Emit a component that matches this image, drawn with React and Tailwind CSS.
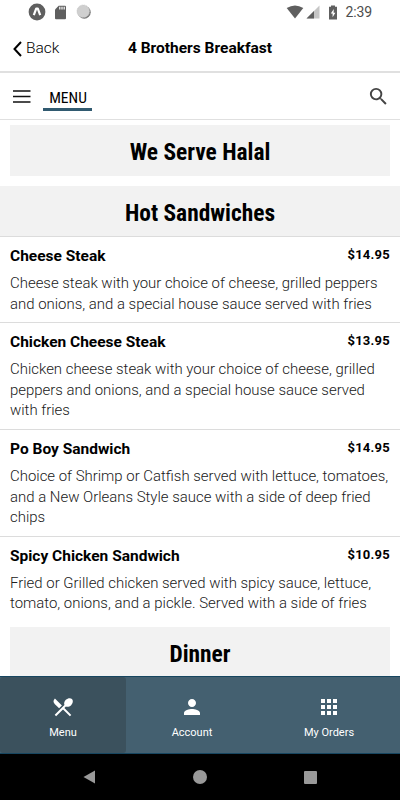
import React from 'react';
import { MdSearch, MdPerson, MdApps } from 'react-icons/md';

const items = [
    {
        name: 'Cheese Steak',
        price: '$14.95',
        description: 'Cheese steak with your choice of cheese, grilled peppers and onions, and a special house sauce served with fries'
    },
    {
        name: 'Chicken Cheese Steak',
        price: '$13.95',
        description: 'Chicken cheese steak with your choice of cheese, grilled peppers and onions, and a special house sauce served with fries'
    },
    {
        name: 'Po Boy Sandwich',
        price: '$14.95',
        description: 'Choice of Shrimp or Catfish served with lettuce, tomatoes, and a New Orleans Style sauce with a side of deep fried chips'
    },
    {
        name: 'Spicy Chicken Sandwich',
        price: '$10.95',
        description: 'Fried or Grilled chicken served with spicy sauce, lettuce, tomato, onions, and a pickle. Served with a side of fries'
    }
];

const StatusBar = () => (
    <div className="flex h-6 shrink-0 items-center justify-between pl-7 pr-7 text-[#5f5f5f]">
        <div className="flex items-center">
            <svg className="h-[18px] w-[18px]" viewBox="0 0 18 18">
                <circle cx="9" cy="9" r="8.4" fill="#5f5f5f" />
                <path d="M5.8 12.2 8.200 5.600h1.600l2.400 6.600" fill="none" stroke="#fff" strokeWidth="2.200" strokeLinejoin="round" />
            </svg>
            <svg className="ml-2 h-[15px] w-[13px]" viewBox="0 0 13 15">
                <path d="M4.700 0.700H11q1 0 1 1v11.600q0 1-1 1H2q-1 0-1-1V4.500z" fill="#5f5f5f" />
                <path d="M5.800 1.800v2.700M8 1.800v2.700M10.200 1.800v2.700" stroke="#fff" strokeWidth="1.200" />
            </svg>
            <svg className="ml-[9px] h-4 w-4" viewBox="0 0 16 16">
                <circle cx="8.300" cy="8.300" r="6.400" fill="#777" />
                <circle cx="7.300" cy="7.300" r="6.300" fill="#cfcfcf" stroke="#b8b8b8" strokeWidth="0.700" strokeDasharray="1 1" />
            </svg>
        </div>
        <div className="flex items-center">
            <svg className="h-[14px] w-[18px]" viewBox="0 0 18 14">
                <path d="M0.700 3Q9-2 17.300 3L9 13.500z" fill="#5f5f5f" />
            </svg>
            <svg className="ml-0.5 h-[14px] w-[14px]" viewBox="0 0 14 14">
                <path d="M13.500 0.500v13H0.500z" fill="#c6c6c6" />
                <path d="M8 6v7.500H0.500z" fill="#5f5f5f" />
            </svg>
            <svg className="ml-2 h-[15px] w-2.5" viewBox="0 0 10 15">
                <path d="M3 0.500h4v1.300h2v12.700H1V1.800h2z" fill="#5f5f5f" />
                <path d="M5.800 4 2.800 8.600h1.800V12.300l2.800-4.600H5.600z" fill="#fff" />
            </svg>
            <span className="ml-[7px] text-sm leading-none tracking-[-0.1px] text-[#4d4d4d]">2:39</span>
        </div>
    </div>
);

const SectionTitle = ({ title, className }) => (
    <h2 className={`shrink-0 bg-[#f2f2f2] text-center font-['Roboto_Condensed','Roboto'] text-[23.4px] font-bold leading-[54px] [font-stretch:75%] ${className}`}>
        {title}
    </h2>
);

const MenuItem = ({ item }) => (
    <li className="border-t border-[#dcdcdc] px-2.5 pb-2 pt-[9px]">
        <div className="flex justify-between">
            <h3 className="text-[15.5px] font-bold leading-[21px]">{item.name}</h3>
            <span className="text-[13px] font-bold leading-[18px] tracking-[0.25px]">{item.price}</span>
        </div>
        <p className="mt-1.5 text-[14.95px] font-light leading-[20.6px] text-[#202020]">
            {item.description}
        </p>
    </li>
);

const Tab = ({ icon, label, className }) => (
    <button type="button" className={`flex flex-col items-center pt-[18px] text-white ${className}`}>
        <span className="flex h-6 items-center">{icon}</span>
        <span className="mt-[7px] text-[11px] leading-[14px]">{label}</span>
    </button>
);

const ForkSpoon = () => (
    <svg className="h-6 w-6" viewBox="0 0 24 24" fill="currentColor">
        <path d="M8.100 13.340l2.830-2.830L3.910 3.500a4.008 4.008 0 0 0 0 5.660l4.190 4.180zm6.780-1.810c1.530.710 3.680.210 5.270-1.380 1.910-1.910 2.280-4.650.810-6.120-1.460-1.460-4.200-1.100-6.120.810-1.590 1.590-2.090 3.740-1.380 5.270L3.700 19.870l1.410 1.410L12 14.410l6.880 6.880 1.410-1.410L13.410 13l1.470-1.470z" />
    </svg>
);

export default function App() {
    return (
        <div className="flex h-[800px] w-[400px] flex-col overflow-hidden bg-white font-['Roboto',sans-serif] text-black">
            <StatusBar />

            <header className="grid h-[49px] shrink-0 grid-cols-[1fr_auto_1fr] items-center border-b-2 border-[#e0e0e0] px-3">
                <button type="button" className="flex items-center pt-0.5 text-[15.5px] font-light">
                    <svg className="mr-1 h-4 w-[10px]" viewBox="0 0 10 16" fill="none" stroke="currentColor" strokeWidth="2">
                        <path d="M9 1 2.500 8l6.500 7" />
                    </svg>
                    Back
                </button>
                <h1 className="pt-[3px] text-[15.5px] font-bold">4 Brothers Breakfast</h1>
            </header>

            <nav className="flex h-[47px] shrink-0 items-center border-b border-[#e0e0e0] px-2.5">
                <svg className="h-[23px] w-[23px]" viewBox="0 0 23 23" stroke="#111" strokeWidth="1.700">
                    <path d="M3 6h17.500M3 11.500h17.500M3 17h17.500" />
                </svg>
                <span className="ml-2.5 mt-[3px] h-[26px] w-[49px] border-b-[3px] border-[#315a70] pl-px text-center font-['Roboto_Condensed','Roboto'] text-[15.5px] leading-[26px] [font-stretch:75%]">
                    MENU
                </span>
                <MdSearch className="ml-auto h-[23px] w-[23px] text-[#444]" />
            </nav>

            <main className="flex min-h-0 flex-1 flex-col overflow-hidden">
                <SectionTitle title="We Serve Halal" className="mx-2.5 mb-2.5 mt-[5px] h-[51px]" />
                <SectionTitle title="Hot Sandwiches" className="h-[50px]" />
                <ul className="shrink-0">
                    {items.map((item) => (
                        <MenuItem key={item.name} item={item} />
                    ))}
                </ul>
                <SectionTitle title="Dinner" className="mx-2.5 mt-[5px] h-[51px]" />
            </main>

            <footer className="flex h-[78px] shrink-0 border-y border-[#174660] bg-[#446070]">
                <Tab icon={<ForkSpoon />} label="Menu" className="w-[126px] rounded-[3px] bg-[#3b515d]" />
                <Tab icon={<MdPerson className="h-6 w-6" />} label="Account" className="w-[132px]" />
                <Tab icon={<MdApps className="h-6 w-6" />} label="My Orders" className="w-[142px]" />
            </footer>

            <div className="flex h-[46px] shrink-0 items-center bg-black text-[#999]">
                <svg className="ml-[83px] h-[14px] w-3" viewBox="0 0 12 14" fill="currentColor">
                    <path d="M12 0.500v13L0.500 7z" />
                </svg>
                <span className="ml-[98px] h-[14px] w-[14px] rounded-full bg-[#999]" />
                <span className="ml-[97px] h-[13px] w-[13px] rounded-[1px] bg-[#999]" />
            </div>
        </div>
    );
}
